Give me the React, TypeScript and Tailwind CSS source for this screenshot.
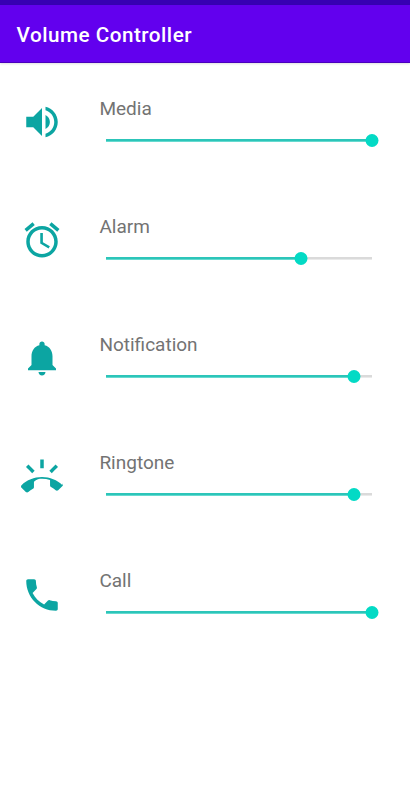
const icons = {
  media:
    "M3 9v6h4l5 5V4L7 9H3zm13.5 3c0-1.77-1.02-3.29-2.5-4.03v8.05c1.48-.73 2.5-2.25 2.5-4.02zM14 3.23v2.06c2.89.86 5 3.54 5 6.71s-2.11 5.85-5 6.71v2.06c4.01-.91 7-4.49 7-8.77s-2.99-7.86-7-8.77z",
  alarm:
    "M22 5.72l-4.6-3.86-1.29 1.53 4.6 3.86L22 5.72zM7.88 3.39L6.6 1.86 2 5.71l1.29 1.53 4.59-3.85zM12.5 8H11v6l4.75 2.85.75-1.23-4-2.37V8zM12 4c-4.97 0-9 4.03-9 9s4.02 9 9 9c4.97 0 9-4.03 9-9s-4.03-9-9-9zm0 16c-3.87 0-7-3.13-7-7s3.13-7 7-7 7 3.13 7 7-3.13 7-7 7z",
  notification:
    "M12 22c1.1 0 2-.9 2-2h-4c0 1.1.89 2 2 2zm6-6v-5c0-3.07-1.64-5.64-4.5-6.32V4c0-.83-.67-1.5-1.5-1.5s-1.5.67-1.5 1.5v.68C7.63 5.36 6 7.92 6 11v5l-2 2v1h16v-1l-2-2z",
  ringtone:
    "M23.71 16.67C20.66 13.78 16.54 12 12 12 7.46 12 3.34 13.78.29 16.67c-.18.18-.29.43-.29.71 0 .28.11.53.29.71l2.48 2.48c.18.18.43.29.71.29.27 0 .52-.11.7-.28.79-.74 1.69-1.36 2.66-1.85.33-.16.56-.5.56-.9v-3.1C8.85 13.25 10.4 13 12 13s3.15.25 4.6.72v3.1c0 .39.23.74.56.9.98.49 1.87 1.12 2.66 1.85.18.18.43.28.7.28.28 0 .53-.11.71-.29l2.48-2.48c.18-.18.29-.43.29-.71 0-.28-.12-.53-.3-.71zM21.16 6.26l-1.41-1.41-3.56 3.55 1.41 1.41s3.45-3.52 3.56-3.55zM13 2h-2v5h2V2zM6.4 9.81L7.81 8.4 4.26 4.84 2.84 6.26c.11.03 3.56 3.55 3.56 3.55z",
  call:
    "M6.62 10.79c1.44 2.83 3.76 5.14 6.59 6.59l2.2-2.2c.27-.27.67-.36 1.02-.24 1.12.37 2.33.57 3.57.57.55 0 1 .45 1 1V20c0 .55-.45 1-1 1-9.39 0-17-7.61-17-17 0-.55.45-1 1-1h3.5c.55 0 1 .45 1 1 0 1.25.2 2.45.57 3.57.11.35.03.74-.25 1.02l-2.2 2.2z",
};

type Channel = { label: string; icon: keyof typeof icons; value: number };

const channels: Channel[] = [
  { label: "Media", icon: "media", value: 100 },
  { label: "Alarm", icon: "alarm", value: 73.3 },
  { label: "Notification", icon: "notification", value: 93.3 },
  { label: "Ringtone", icon: "ringtone", value: 93.3 },
  { label: "Call", icon: "call", value: 100 },
];

function VolumeSlider({ value }: { value: number }) {
  return (
    <div className="relative ml-[6.2px] mt-[13px] flex h-[13px] w-[266.8px] items-center">
      <div className="h-[3px] w-full bg-linear-to-b from-[#dadada] via-[#dadada] to-[#f2f2f2]">
        <div
          className="h-[3px] bg-linear-to-b from-[#2cc5b9] via-[#2cc5b9] to-[#7ce4da]"
          style={{ width: `${value}%` }}
        />
      </div>
      <div
        className="absolute top-0 size-[13px] -translate-x-1/2 rounded-full bg-[#03dac5]"
        style={{ left: `${value}%` }}
      />
    </div>
  );
}

function ChannelRow({ label, icon, value }: Channel) {
  return (
    <section className="flex h-[118.1px] items-start pl-[20.6px]">
      <svg viewBox="0 0 24 24" className="mt-[5.3px] size-[42px] shrink-0 fill-[#0ca5a2]">
        <path d={icons[icon]} />
      </svg>
      <div className="ml-[36.8px] pt-px">
        <h2 className="h-6 text-[19px] leading-6 text-[#737373]">{label}</h2>
        <VolumeSlider value={value} />
      </div>
    </section>
  );
}

export default function App() {
  return (
    <div className="h-[800px] w-[410px] overflow-hidden bg-white font-[Roboto,sans-serif]">
      <div className="h-[4.5px] bg-[#3700b3]" />
      <header className="flex h-[58.5px] items-center border-b border-[#4a00bd] bg-[#6200ee] pl-[16.5px] pt-[4px] shadow-[0_1px_2px_rgba(0,0,0,0.12)]">
        <h1 className="text-[20.7px] font-medium leading-6 tracking-[0.5px] text-white">
          Volume Controller
        </h1>
      </header>
      <main className="pt-[33px]">
        {channels.map((channel) => (
          <ChannelRow key={channel.label} {...channel} />
        ))}
      </main>
    </div>
  );
}
